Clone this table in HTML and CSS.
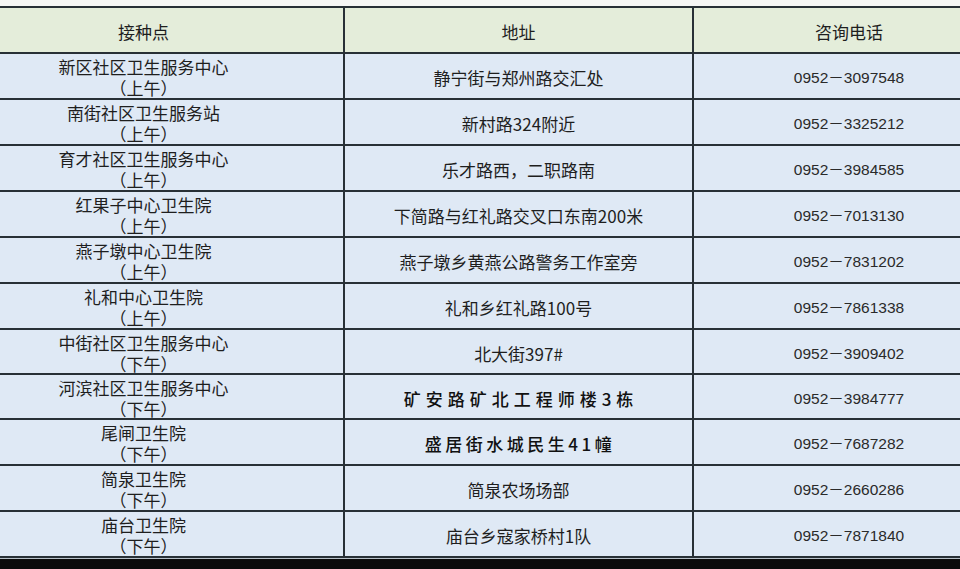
FILE: index.html
```html
<!DOCTYPE html>
<html lang="zh-CN">
<head>
<meta charset="utf-8">
<title>接种点</title>
<link rel="stylesheet" href="styles.css">
</head>
<body>
<div class="page">
  <div class="sheet">
    <div class="cell head">接种点</div>
    <div class="cell head">地址</div>
    <div class="cell head">咨询电话</div>

    <div class="cell name"><span>新区社区卫生服务中心</span><span>（上午）</span></div>
    <div class="cell addr">静宁街与郑州路交汇处</div>
    <div class="cell tel">0952－3097548</div>

    <div class="cell name"><span>南街社区卫生服务站</span><span>（上午）</span></div>
    <div class="cell addr">新村路324附近</div>
    <div class="cell tel">0952－3325212</div>

    <div class="cell name"><span>育才社区卫生服务中心</span><span>（上午）</span></div>
    <div class="cell addr">乐才路西，二职路南</div>
    <div class="cell tel">0952－3984585</div>

    <div class="cell name"><span>红果子中心卫生院</span><span>（上午）</span></div>
    <div class="cell addr">下简路与红礼路交叉口东南200米</div>
    <div class="cell tel">0952－7013130</div>

    <div class="cell name"><span>燕子墩中心卫生院</span><span>（上午）</span></div>
    <div class="cell addr">燕子墩乡黄燕公路警务工作室旁</div>
    <div class="cell tel">0952－7831202</div>

    <div class="cell name"><span>礼和中心卫生院</span><span>（上午）</span></div>
    <div class="cell addr">礼和乡红礼路100号</div>
    <div class="cell tel">0952－7861338</div>

    <div class="cell name"><span>中街社区卫生服务中心</span><span>（下午）</span></div>
    <div class="cell addr">北大街397#</div>
    <div class="cell tel">0952－3909402</div>

    <div class="cell name"><span>河滨社区卫生服务中心</span><span>（下午）</span></div>
    <div class="cell addr spaced-wide">矿安路矿北工程师楼3栋</div>
    <div class="cell tel">0952－3984777</div>

    <div class="cell name"><span>尾闸卫生院</span><span>（下午）</span></div>
    <div class="cell addr spaced">盛居街水城民生41幢</div>
    <div class="cell tel">0952－7687282</div>

    <div class="cell name"><span>简泉卫生院</span><span>（下午）</span></div>
    <div class="cell addr">简泉农场场部</div>
    <div class="cell tel">0952－2660286</div>

    <div class="cell name"><span>庙台卫生院</span><span>（下午）</span></div>
    <div class="cell addr">庙台乡寇家桥村1队</div>
    <div class="cell tel">0952－7871840</div>
  </div>
  <div class="edge"></div>
  <div class="bottom"></div>
</div>
</body>
</html>
```

FILE: styles.css
```css
html, body {
  margin: 0;
  padding: 0;
  width: 960px;
  height: 569px;
  overflow: hidden;
  background: #0b0b0b;
}

.page {
  width: 960px;
  height: 569px;
  display: flex;
  flex-direction: column;
  background: #f6f7f5;
  padding-top: 6px;
  box-sizing: border-box;
  overflow: hidden;
  font-family: "Noto Sans CJK SC", "Noto Sans", sans-serif;
  color: #1e1e1e;
}

.sheet {
  margin-left: -56px;
  width: 1060px;
  display: grid;
  grid-template-columns: 399px 347px 310px;
  grid-template-rows: 44px 44px 44px 44px 44px 44px 44px 43px 43px 44px 44px 44px;
  column-gap: 2px;
  row-gap: 2px;
  padding: 2px 0;
  background: #283036;
  flex: none;
}

.cell {
  background: #dfe9f5;
  display: flex;
  align-items: center;
  justify-content: center;
  padding-top: 4px;
  box-sizing: border-box;
  font-size: 17px;
  line-height: 22px;
  white-space: nowrap;
}

.head {
  background: #e4edda;
}

.name {
  flex-direction: column;
  justify-content: flex-start;
  align-items: center;
  padding-top: 2px;
  line-height: 21px;
}

.tel {
  font-family: "Liberation Sans", "Noto Sans CJK SC", sans-serif;
  font-size: 15.5px;
  color: #2a2a2a;
}

.spaced-wide {
  letter-spacing: 5px;
  font-weight: 500;
  color: #111;
  padding-left: 5px;
}

.spaced {
  letter-spacing: 3.5px;
  font-weight: 500;
  color: #111;
  padding-left: 3px;
}

.edge {
  height: 1px;
  background: #b7c0c8;
  flex: none;
}

.bottom {
  flex: 1;
  background: #0b0b0b;
}
```
